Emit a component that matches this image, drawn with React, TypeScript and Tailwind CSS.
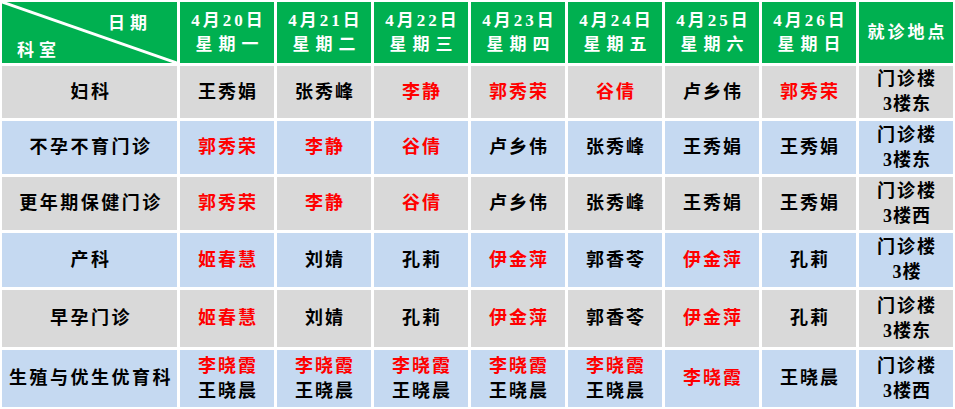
import React from "react";

type Doc = { name: string; red?: boolean };
type Row = { dept: string; tone: "gray" | "blue"; docs: Doc[][]; place: [string, string] };

const r = (name: string): Doc[] => [{ name, red: true }];
const b = (name: string): Doc[] => [{ name }];
const pair: Doc[] = [{ name: "李晓霞", red: true }, { name: "王晓晨" }];

const days = [
  ["4月20日", "星期一"],
  ["4月21日", "星期二"],
  ["4月22日", "星期三"],
  ["4月23日", "星期四"],
  ["4月24日", "星期五"],
  ["4月25日", "星期六"],
  ["4月26日", "星期日"],
];

const rows: Row[] = [
  {
    dept: "妇科",
    tone: "gray",
    docs: [b("王秀娟"), b("张秀峰"), r("李静"), r("郭秀荣"), r("谷倩"), b("卢乡伟"), r("郭秀荣")],
    place: ["门诊楼", "3楼东"],
  },
  {
    dept: "不孕不育门诊",
    tone: "blue",
    docs: [r("郭秀荣"), r("李静"), r("谷倩"), b("卢乡伟"), b("张秀峰"), b("王秀娟"), b("王秀娟")],
    place: ["门诊楼", "3楼东"],
  },
  {
    dept: "更年期保健门诊",
    tone: "gray",
    docs: [r("郭秀荣"), r("李静"), r("谷倩"), b("卢乡伟"), b("张秀峰"), b("王秀娟"), b("王秀娟")],
    place: ["门诊楼", "3楼西"],
  },
  {
    dept: "产科",
    tone: "blue",
    docs: [r("姬春慧"), b("刘婧"), b("孔莉"), r("伊金萍"), b("郭香苓"), r("伊金萍"), b("孔莉")],
    place: ["门诊楼", "3楼"],
  },
  {
    dept: "早孕门诊",
    tone: "gray",
    docs: [r("姬春慧"), b("刘婧"), b("孔莉"), r("伊金萍"), b("郭香苓"), r("伊金萍"), b("孔莉")],
    place: ["门诊楼", "3楼东"],
  },
  {
    dept: "生殖与优生优育科",
    tone: "blue",
    docs: [pair, pair, pair, pair, pair, r("李晓霞"), b("王晓晨")],
    place: ["门诊楼", "3楼西"],
  },
];

const font = { fontFamily: '"Liberation Serif", "Noto Sans CJK SC", serif' };

export default function App() {
  return (
    <div
      className="w-[955px] h-[409px] bg-white p-[2px] grid grid-cols-[175px_repeat(8,94px)] grid-rows-[61px_52px_53px_53px_54px_57px_57px] gap-[3px] font-bold text-[18px] leading-[25px] tracking-[2px] text-black"
      style={font}
    >
      {/* corner header */}
      <div className="relative bg-[#00b050] text-white text-[17px]">
        <svg className="absolute inset-0" width="175" height="61" viewBox="0 0 175 61">
          <line x1="0" y1="0" x2="175" y2="61" stroke="white" strokeWidth="3" />
        </svg>
        <span className="absolute left-[106px] top-[9px] tracking-[5px]">日期</span>
        <span className="absolute left-[15px] top-[36px] tracking-[5px]">科室</span>
      </div>
      {days.map(([d, w]) => (
        <div key={d} className="bg-[#00b050] text-white text-[17px] flex flex-col items-center justify-center pl-[3px] leading-[24px] tracking-[3px]">
          <span>{d}</span>
          <span className="tracking-[6px] pl-[3px]">{w}</span>
        </div>
      ))}
      <div className="bg-[#00b050] text-white text-[17px] tracking-[3px] flex items-center justify-center pl-[3px]">就诊地点</div>

      {rows.map((row) => {
        const bg = row.tone === "gray" ? "bg-[#d9d9d9]" : "bg-[#c5d9f1]";
        return (
          <React.Fragment key={row.dept}>
            <div className={`${bg} flex items-center justify-center pl-[3px] tracking-[2.5px]`}>{row.dept}</div>
            {row.docs.map((cell, i) => (
              <div key={i} className={`${bg} flex flex-col items-center justify-center pl-[2px]`}>
                {cell.map((d, j) => (
                  <span key={j} className={d.red ? "text-[#ff0000]" : "text-black"}>
                    {d.name}
                  </span>
                ))}
              </div>
            ))}
            <div className={`${bg} flex flex-col items-center justify-center pl-[2px]`}>
              <span>{row.place[0]}</span>
              <span className="tracking-[1px]">{row.place[1]}</span>
            </div>
          </React.Fragment>
        );
      })}
    </div>
  );
}
